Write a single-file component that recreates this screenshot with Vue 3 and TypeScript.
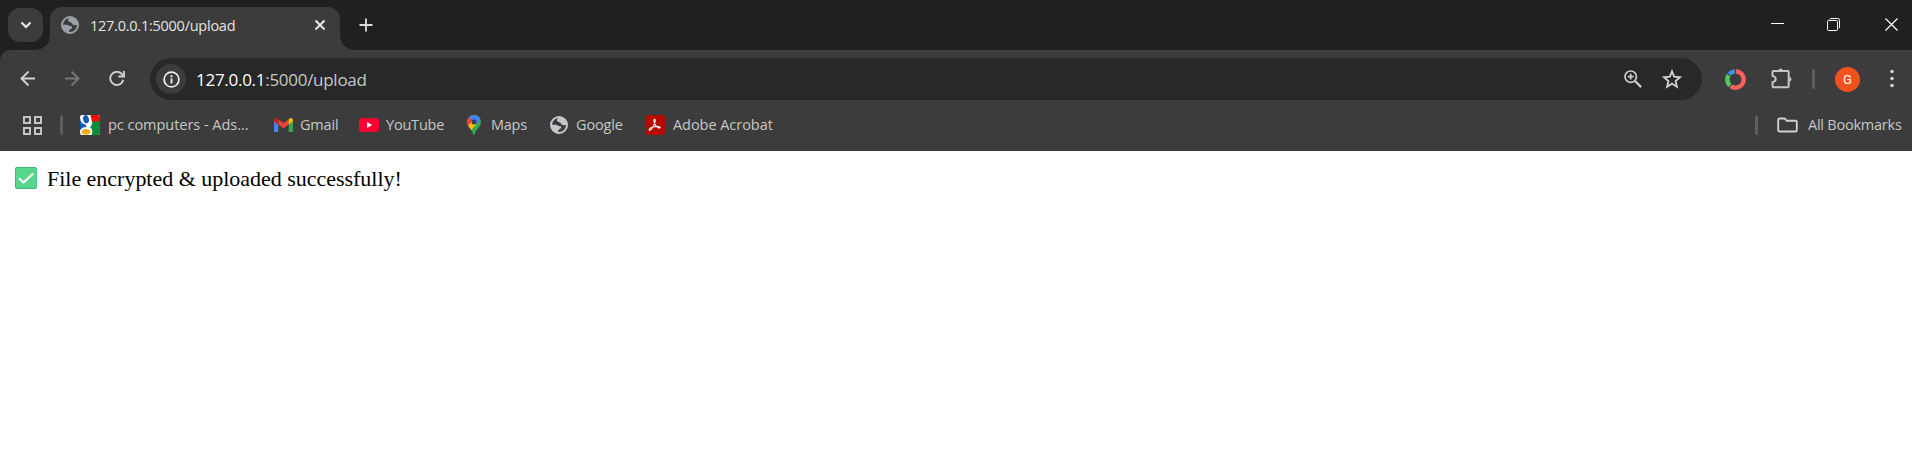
<script setup lang="ts">
interface Bookmark {
  id: string
  label: string
}

const address = { host: '127.0.0.1', rest: ':5000/upload' }
const message = 'File encrypted & uploaded successfully!'
const bookmarks: Bookmark[] = [
  { id: 'ads', label: 'pc computers - Ads...' },
  { id: 'gmail', label: 'Gmail' },
  { id: 'youtube', label: 'YouTube' },
  { id: 'maps', label: 'Maps' },
  { id: 'google', label: 'Google' },
  { id: 'acrobat', label: 'Adobe Acrobat' },
]
</script>

<template>
  <div class="browser">
    <header class="tabstrip">
      <button class="tab-search" aria-label="Search tabs">
        <svg width="12" height="8" viewBox="0 0 12 8"><path d="M1.500 1.500 6 6l4.500-4.500" fill="none" stroke="#e8e8e8" stroke-width="2.200" /></svg>
      </button>
      <div class="tab">
        <svg class="tab-globe" width="18" height="18" viewBox="0 0 18 18">
          <circle cx="9" cy="9" r="8" fill="none" stroke="#9aa0a9" stroke-width="2" />
          <path d="M1 8.800h5c1.500 0 1.700 1 2.700 1.300 1 .3 2.500-.1 2.500 1.300 0 1.300-1.500 1.200-2.300 2-.6.700-.6 1.700-1.200 3.200C3.500 16 1 12.500 1 8.800ZM9.300 1c-.2 1.200-2.300 1.300-2.300 2.900 0 1.500 1.500 2 2.500 2.300 1.500.4 1.700 2.400 3.100 2.800 1.300.4 2.700-.1 4.400.1C17 4.400 13.500 1 9.300 1Z" fill="#9aa0a9" />
        </svg>
        <span class="tab-title">{{ address.host }}{{ address.rest }}</span>
        <svg class="tab-close" width="12" height="12" viewBox="0 0 12 12"><path d="m1.500 1.500 9 9m0-9-9 9" stroke="#ececec" stroke-width="1.900" /></svg>
      </div>
      <svg class="new-tab" width="14" height="14" viewBox="0 0 14 14"><path d="M7 .5v13M.5 7h13" stroke="#dedede" stroke-width="1.800" /></svg>
      <div class="window-controls">
        <svg width="13" height="13" viewBox="0 0 13 13"><path d="M0 5.500h13" stroke="#fff" /></svg>
        <svg width="13" height="13" viewBox="0 0 13 13" fill="none" stroke="#fff"><rect x=".5" y="2.500" width="10" height="10" rx="1" /><path d="M2.500 1.200C3 .7 3.500.5 4 .5h6.500a2 2 0 0 1 2 2V9c0 .6-.3 1.200-.8 1.500" /></svg>
        <svg width="13" height="13" viewBox="0 0 13 13"><path d="m.5.5 12 12m0-12-12 12" stroke="#fff" stroke-width="1.200" /></svg>
      </div>
    </header>

    <div class="chrome">
      <nav class="toolbar">
        <svg width="16" height="16" viewBox="0 0 16 16" class="nav-icon"><path d="M15 7.500H2M8.500.5l-7 7 7 7" /></svg>
        <svg width="16" height="16" viewBox="0 0 16 16" class="nav-icon disabled"><path d="M1 7.500h13M7.500.5l7 7-7 7" /></svg>
        <svg width="16" height="16" viewBox="0 0 16 16" class="nav-icon"><path d="M14.300 8.800A6.600 6.600 0 1 1 12.800 3L14.800 5M15 0v5.500H9.300" /></svg>
        <div class="omnibox">
          <span class="site-info">
            <svg width="17" height="17" viewBox="0 0 17 17"><circle cx="8.500" cy="8.500" r="7.400" fill="none" stroke="#eee" stroke-width="1.700" /><path d="M8.500 7.500v5M8.500 4.300v2" stroke="#eee" stroke-width="1.900" /></svg>
          </span>
          <span class="url"><span class="host">{{ address.host }}</span>{{ address.rest }}</span>
          <svg class="zoom" width="18" height="18" viewBox="0 0 18 18" fill="none" stroke="#cecece"><circle cx="6.700" cy="6.700" r="5.700" stroke-width="1.700" /><path d="m10.800 10.800 6.300 6.300" stroke-width="2.200" /><path d="M6.700 3.800v5.800M3.800 6.700h5.800" stroke-width="1.700" /></svg>
          <svg class="star" width="20" height="20" viewBox="0 0 20 20"><path d="m10 2.400 2.200 5.300 5.800.5-4.400 3.800 1.300 5.700-4.900-3-4.900 3L6.400 12 2 8.200l5.800-.5Z" fill="none" stroke="#cecece" stroke-width="1.900" /></svg>
        </div>
        <svg class="ring" width="21" height="21" viewBox="0 0 21 21">
          <g fill="none" stroke-width="4.400" transform="rotate(-90 10.500 10.500)">
            <circle cx="10.500" cy="10.500" r="8.200" pathLength="360" stroke="#ff625e" stroke-dasharray="212 148" stroke-dashoffset="-3" />
            <circle cx="10.500" cy="10.500" r="8.200" pathLength="360" stroke="#52c75b" stroke-dasharray="82 278" stroke-dashoffset="-222" />
            <circle cx="10.500" cy="10.500" r="8.200" pathLength="360" stroke="#3594f4" stroke-dasharray="44 316" stroke-dashoffset="-311" />
          </g>
        </svg>
        <svg class="puzzle" width="22" height="22" viewBox="0 0 22 22"><path d="M2.500 3h14.200a1 1 0 0 1 1 1v14.200a1 1 0 0 1-1 1H2.500a1 1 0 0 1-1-1v-3.900c4.300-1 4.300-5.400 0-6.400V4a1 1 0 0 1 1-1Z" fill="none" stroke="#c6c6c6" stroke-width="2" /><path d="M7.500 2.500a2.100 2.100 0 0 1 4.200 0M18.200 9a2.300 2.300 0 0 1 0 4.600" fill="#c6c6c6" /></svg>
        <span class="divider toolbar-divider"></span>
        <span class="avatar">G</span>
        <svg class="menu" width="4" height="20" viewBox="0 0 4 20" fill="#d2d2d2"><circle cx="2" cy="2.500" r="1.800" /><circle cx="2" cy="9.500" r="1.800" /><circle cx="2" cy="16.500" r="1.800" /></svg>
      </nav>

      <nav class="bookmarks">
        <svg class="apps" width="19" height="19" viewBox="0 0 19 19" fill="none" stroke="#c5c5c5" stroke-width="2"><rect x="1" y="1" width="6" height="6" /><rect x="12" y="1" width="6" height="6" /><rect x="1" y="12" width="6" height="6" /><rect x="12" y="12" width="6" height="6" /></svg>
        <span class="divider first-divider"></span>
        <a v-for="item in bookmarks" :key="item.id" class="bookmark" :class="item.id">
          <svg v-if="item.id === 'ads'" width="20" height="20" viewBox="0 0 20 20">
            <rect width="20" height="20" rx="2" fill="#fff" /><path d="M10.500 0H18a2 2 0 0 1 2 2v5h-8Z" fill="#f20d0d" /><path d="M12 6.500h8V18a2 2 0 0 1-2 2h-6.500c1.500-3 1-6-1.500-8 2-1.500 2.500-3.500 2-5.500Z" fill="#078b3c" /><path d="M0 2.500C.5 7 2 9 5.500 9.500L6.500 12C3 12 1.500 13 0 15.500Z" fill="#1559b7" />
            <ellipse cx="6" cy="4.200" rx="2.800" ry="4.200" fill="#1559b7" transform="rotate(-15 6 4.200)" /><ellipse cx="6" cy="16.800" rx="4.500" ry="2.900" fill="#efb01b" />
          </svg>
          <svg v-else-if="item.id === 'gmail'" width="19" height="14" viewBox="0 0 19 14">
            <path d="M0 2h4.300v12H1.500A1.500 1.500 0 0 1 0 12.500Z" fill="#4285f4" /><path d="M14.700 2H19v10.500a1.500 1.500 0 0 1-1.500 1.500h-2.800Z" fill="#34a853" /><path d="M4.300 1.200 9.500 5l5.200-3.800v5.300l-5.200 4-5.200-4Z" fill="#ea4335" /><path d="M0 2C0 .2 2-.6 3.400.5l.9.7v5.300L0 3.500Z" fill="#c5221f" /><path d="M19 2c0-1.800-2-2.600-3.400-1.500l-.9.700v5.300l4.300-3Z" fill="#fbbc04" />
          </svg>
          <svg v-else-if="item.id === 'youtube'" width="20" height="14" viewBox="0 0 20 14"><rect width="20" height="14" rx="3.500" fill="#ff0033" /><path d="m8 4 5.200 3L8 10Z" fill="#fff" /></svg>
          <svg v-else-if="item.id === 'maps'" width="14" height="20" viewBox="0 0 14 20">
            <defs><clipPath id="pin"><path d="M7 0a7 7 0 0 1 7 7c0 5-5 6.500-6.100 12.200a1 1 0 0 1-1.800 0C5 13.500 0 12 0 7a7 7 0 0 1 7-7Z" /></clipPath></defs>
            <g clip-path="url(#pin)"><path d="M0 0h14v20H0Z" fill="#34a853" /><path d="M0 0h14v3.500L7 12 0 7Z" fill="#4285f4" /><path d="M0 2h1.500L6 6 2 11H0Z" fill="#ea4335" /><path d="m1 11 4-5 4.500 3L4 15.500Z" fill="#fbbc04" /></g><circle cx="7" cy="7" r="2.500" fill="#30415e" />
          </svg>
          <svg v-else-if="item.id === 'google'" width="18" height="18" viewBox="0 0 18 18">
            <circle cx="9" cy="9" r="8" fill="none" stroke="#c4c7cb" stroke-width="2" />
            <path d="M1 8.800h5c1.500 0 1.700 1 2.700 1.300 1 .3 2.500-.1 2.500 1.300 0 1.300-1.500 1.200-2.300 2-.6.700-.6 1.700-1.200 3.200C3.500 16 1 12.500 1 8.800ZM9.300 1c-.2 1.200-2.300 1.300-2.300 2.900 0 1.500 1.500 2 2.500 2.300 1.500.4 1.700 2.400 3.100 2.800 1.300.4 2.700-.1 4.400.1C17 4.400 13.500 1 9.300 1Z" fill="#c4c7cb" />
          </svg>
          <svg v-else width="20" height="20" viewBox="0 0 20 20"><rect width="20" height="20" rx="3.200" fill="#b30b00" /><path d="M4.300 15c-1.200-1.300 4-3.900 8.900-3.500 3 .3 2.200 2 .4 1.400C11 12 8.500 7.500 9 5.100c.3-1.100 1.500-.9 1.300.7C9.900 8.800 6.300 16.300 4.300 15Z" fill="none" stroke="#fff" stroke-width="1.100" /></svg>
          <span class="label">{{ item.label }}</span>
        </a>
        <span class="divider last-divider"></span>
        <svg class="folder" width="21" height="16" viewBox="0 0 21 16"><path d="M2.500 1.500h5.200l2.200 2.300h8.600c.7 0 1.300.6 1.300 1.300v8.100c0 .7-.6 1.300-1.300 1.300h-16c-.7 0-1.300-.6-1.300-1.300V2.800c0-.7.6-1.300 1.300-1.300Z" fill="none" stroke="#d0d0d0" stroke-width="1.900" /></svg>
        <span class="label all">All Bookmarks</span>
      </nav>
    </div>

    <main class="page">
      <svg width="22" height="22" viewBox="0 0 22 22"><rect width="22" height="22" rx="2" fill="#3fb777" /><rect x="1" y="1" width="20.500" height="19.800" rx="1" fill="#58d68d" /><path d="m4 11.300 4.500 4.300L18.200 6.500" fill="none" stroke="#fff" stroke-width="2.100" /></svg>
      <span class="message">{{ message }}</span>
    </main>
  </div>
</template>

<style>
body {
  margin: 0;
  background: #fff;
}
</style>

<style scoped>
.browser {
  width: 1912px;
  height: 468px;
  overflow: hidden;
  background: #fff;
  color: #c7c7c7;
  font-family: "Open Sans", "Noto Sans", sans-serif;
}
svg {
  display: block;
  flex: none;
}
.tabstrip {
  display: flex;
  height: 50px;
  background: #1f2120;
}
.tab-search {
  display: grid;
  place-items: center;
  box-sizing: border-box;
  width: 35px;
  height: 34px;
  margin: 8px 7px 0 8px;
  padding: 0;
  border: 0;
  border-radius: 12px;
  background: #3c3c3c;
}
.tab {
  position: relative;
  display: flex;
  align-items: center;
  box-sizing: border-box;
  width: 290px;
  height: 43px;
  margin-top: 7px;
  padding: 0 14px 7px 11px;
  border-radius: 12px 12px 0 0;
  background: #3c3c3c;
}
.tab::before,
.tab::after {
  content: "";
  position: absolute;
  bottom: 0;
  width: 14px;
  height: 14px;
}
.tab::before {
  right: 100%;
  background: radial-gradient(circle at 0 0, transparent 13.500px, #3c3c3c 14px);
}
.tab::after {
  left: 100%;
  background: radial-gradient(circle at 100% 0, transparent 13.500px, #3c3c3c 14px);
}
.tab-title {
  margin-left: 11px;
  padding-top: 2px;
  color: #e3e3e3;
  font-size: 14.500px;
  line-height: 20px;
  letter-spacing: -0.250px;
  white-space: nowrap;
}
.tab-close {
  margin-left: auto;
}
.new-tab {
  margin: 18px 0 0 19px;
}
.window-controls {
  display: flex;
  gap: 44px;
  margin: 18px 14px 0 auto;
}
.window-controls svg:nth-child(2) {
  margin: 0 1px 0 -1px;
}
.chrome {
  height: 101px;
  background: linear-gradient(#1f2120 12px, #3c3c3c 12px);
}
.toolbar {
  display: flex;
  align-items: center;
  box-sizing: border-box;
  height: 58px;
  padding-left: 20px;
  border-radius: 10px 0 0;
  background: #3c3c3c;
}
.nav-icon {
  margin-right: 29px;
  fill: none;
  stroke: #d0d0d0;
  stroke-width: 1.900;
}
.disabled {
  margin-left: -1px;
  stroke: #777;
}
.nav-icon + .nav-icon + .nav-icon {
  margin-right: 25px;
}
.omnibox {
  display: flex;
  align-items: center;
  box-sizing: border-box;
  width: 1552px;
  height: 42px;
  padding: 0 20px 0 6px;
  border-radius: 21px;
  background: #282828;
}
.site-info {
  display: grid;
  place-items: center;
  width: 30px;
  height: 30px;
  border-radius: 50%;
  background: #3c3c3c;
}
.url {
  margin-left: 10px;
  padding-top: 2px;
  font-size: 17px;
  line-height: 24px;
  letter-spacing: -0.280px;
  white-space: nowrap;
}
.host {
  color: #fff;
}
.zoom {
  margin-left: auto;
}
.star {
  margin-left: 20px;
}
.ring {
  margin-left: 23px;
}
.puzzle {
  margin-left: 25px;
}
.divider {
  flex: none;
  width: 3px;
  height: 20px;
  border-radius: 1.500px;
  background: #5e5e5e;
}
.toolbar-divider {
  margin-left: 19px;
}
.avatar {
  display: grid;
  place-items: center;
  width: 25px;
  height: 25px;
  margin-left: 20px;
  border-radius: 50%;
  background: #f4511e;
  color: #fff;
  font: 13px/25px Roboto, sans-serif;
}
.menu {
  margin-left: 30px;
}
.bookmarks {
  display: flex;
  align-items: center;
  box-sizing: border-box;
  height: 43px;
  padding: 0 10px 9px 23px;
}
.first-divider {
  margin: 0 17px 0 18px;
}
.bookmark {
  display: flex;
  align-items: center;
  flex: none;
}
.label {
  font-size: 14.500px;
  line-height: 20px;
  white-space: nowrap;
}
.bookmark .label {
  margin-left: 8px;
}
.ads { width: 194px; }
.gmail { width: 85px; }
.youtube { width: 108px; }
.maps { width: 83px; }
.google { width: 95px; }
.bookmark.ads .label { letter-spacing: -0.030px; }
.bookmark.gmail .label { margin-left: 7px; letter-spacing: -0.200px; }
.bookmark.youtube .label { margin-left: 7px; letter-spacing: -0.200px; }
.bookmark.maps .label { margin-left: 10px; letter-spacing: -0.250px; }
.google .label { letter-spacing: -0.150px; }
.acrobat .label { letter-spacing: -0.050px; }
.last-divider {
  margin-left: auto;
}
.folder {
  margin-left: 19px;
}
.all {
  width: 94px;
  margin-left: 10px;
  letter-spacing: -0.230px;
}
.page {
  display: flex;
  align-items: flex-start;
  padding: 16px 15px;
  color: #000;
}
.message {
  margin: -1px 0 0 10px;
  font: 22px/25px "Liberation Serif", serif;
  letter-spacing: -0.020px;
  white-space: nowrap;
}
</style>
